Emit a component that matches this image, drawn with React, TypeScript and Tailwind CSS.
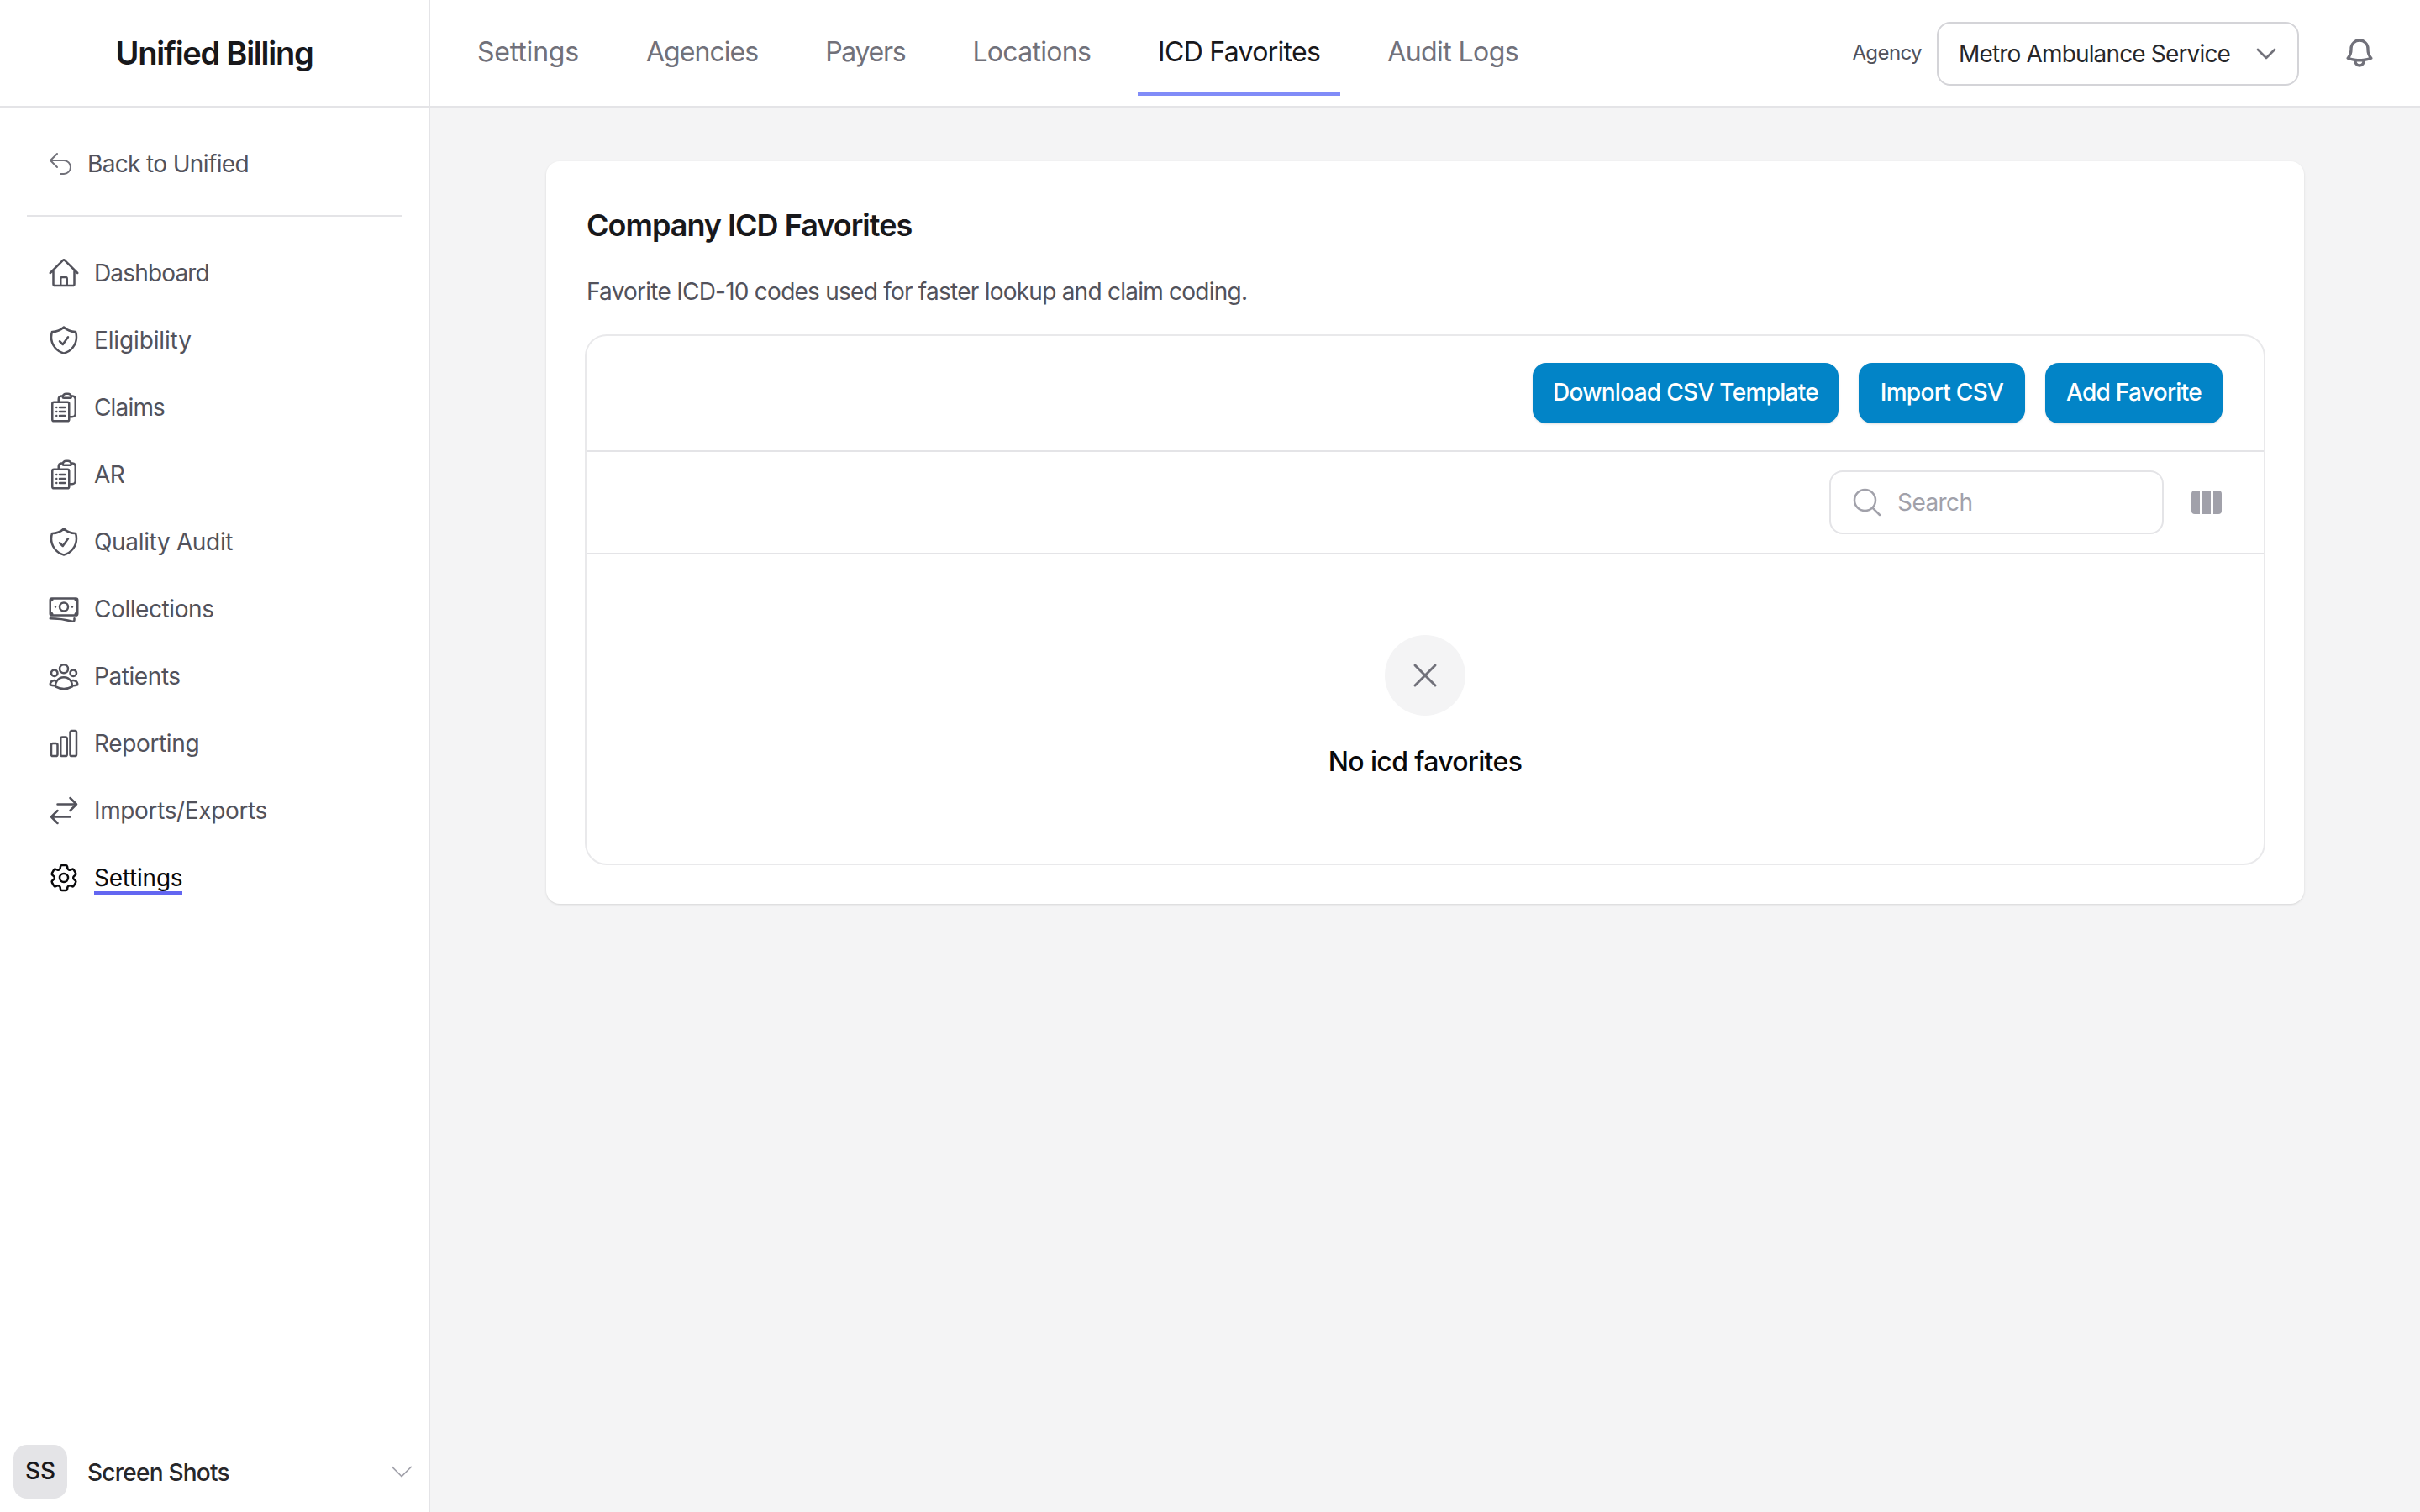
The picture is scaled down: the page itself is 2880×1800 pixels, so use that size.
import React from "react";
import {
  HiOutlineHome, HiOutlineShieldCheck, HiOutlineClipboardDocumentList, HiOutlineBanknotes,
  HiOutlineUserGroup, HiOutlineChartBar, HiOutlineArrowsRightLeft, HiOutlineCog6Tooth,
  HiOutlineArrowUturnLeft, HiOutlineBell, HiOutlineChevronDown, HiOutlineMagnifyingGlass, HiOutlineXMark,
} from "react-icons/hi2";

const nav = [
  { label: "Dashboard", Icon: HiOutlineHome, track: "tracking-[-0.03em]" },
  { label: "Eligibility", Icon: HiOutlineShieldCheck, track: "tracking-[-0.005em]" },
  { label: "Claims", Icon: HiOutlineClipboardDocumentList, track: "tracking-[-0.03em]" },
  { label: "AR", Icon: HiOutlineClipboardDocumentList, track: "tracking-[-0.02em]" },
  { label: "Quality Audit", Icon: HiOutlineShieldCheck, track: "tracking-[-0.012em]" },
  { label: "Collections", Icon: HiOutlineBanknotes, track: "tracking-[-0.015em]" },
  { label: "Patients", Icon: HiOutlineUserGroup, track: "tracking-[-0.015em]" },
  { label: "Reporting", Icon: HiOutlineChartBar, track: "tracking-[-0.013em]" },
  { label: "Imports/Exports", Icon: HiOutlineArrowsRightLeft, track: "tracking-[-0.013em]" },
];
const tabs = [
  { label: "Settings", track: "tracking-[-0.006em]" },
  { label: "Agencies", track: "tracking-[-0.03em]" },
  { label: "Payers", track: "tracking-[-0.04em]" },
  { label: "Locations", track: "tracking-[-0.022em]" },
  { label: "ICD Favorites", track: "tracking-[-0.022em]" },
  { label: "Audit Logs", track: "tracking-[-0.018em]" },
];

function Btn({ children, w }: { children: React.ReactNode; w: string }) {
  return (
    <button className={`${w} h-[72px] rounded-2xl bg-[#0284c7] pb-[2px] text-white text-[28px] font-medium tracking-[-0.025em] shadow-sm`}>
      {children}
    </button>
  );
}

export default function App() {
  return (
    <div className="flex h-[1800px] w-[2880px] overflow-hidden bg-[#f4f4f5] font-['Inter',sans-serif] text-[#09090b]">
      <aside className="flex h-full w-[512px] shrink-0 flex-col border-r-2 border-[#e4e4e7] bg-white">
        <div className="flex h-[128px] shrink-0 items-center justify-center border-b-2 border-[#e4e4e7]">
          <span className="text-[38px] font-semibold tracking-[-0.033em] text-[#18181b]">Unified Billing</span>
        </div>
        <div className="px-8 pt-[47px]">
          <div className="flex h-10 items-center gap-4 pl-6 text-[28px] tracking-[-0.023em] text-[#52525b]">
            <HiOutlineArrowUturnLeft className="h-8 w-8 text-[#71717a]" />
            <span>Back to Unified</span>
          </div>
          <div className="mt-[41px] h-[2px] bg-[#e4e4e7]" />
        </div>
        <nav className="flex flex-col gap-10 px-8 pt-[47px]">
          {nav.map(({ label, Icon, track }) => (
            <div key={label} className={`flex h-10 items-center gap-4 pl-6 text-[28px] text-[#52525b] ${track}`}>
              <Icon className="h-10 w-10" />
              <span>{label}</span>
            </div>
          ))}
          <div className="flex h-10 items-center gap-4 pl-6 text-[28px] tracking-[-0.008em] text-[#09090b]">
            <HiOutlineCog6Tooth className="h-10 w-10" />
            <span className="border-b-4 border-[#6366f1] pt-1 leading-[32px]">Settings</span>
          </div>
        </nav>
        <div className="mt-auto flex items-center pb-4 pl-4 pr-[14px]">
          <div className="flex h-16 w-16 items-center justify-center rounded-2xl bg-[#e4e4e7] pb-[3px] text-[28px] font-medium text-[#18181b]">SS</div>
          <span className="ml-6 pt-[2px] text-[28px] font-medium tracking-[-0.027em] text-[#27272a]">Screen Shots</span>
          <HiOutlineChevronDown className="ml-auto h-9 w-9 text-[#a1a1aa]" strokeWidth={1} />
        </div>
      </aside>

      <div className="flex min-w-0 flex-1 flex-col">
        <header className="flex h-[128px] shrink-0 items-start border-b-2 border-[#e4e4e7] bg-white pl-8 pr-[52px]">
          <div className="flex gap-8">
            {tabs.map(({ label, track }) => {
              const active = label === "ICD Favorites";
              return (
                <div
                  key={label}
                  className={`flex h-[114px] items-center border-b-4 px-6 pt-[14px] text-[32px] ${track} ${
                    active ? "border-[#818cf8] text-[#18181b]" : "border-transparent text-[#71717a]"
                  }`}
                >
                  {label}
                </div>
              );
            })}
          </div>
          <div className="ml-auto flex h-[126px] items-center">
            <span className="text-[24px] tracking-[-0.025em] text-[#52525b]">Agency</span>
            <div className="ml-[18px] mt-[2px] flex h-[76px] w-[431px] items-center justify-between rounded-2xl border-2 border-[#d4d4d8] pl-6 pr-[21px] text-[28px] tracking-[-0.03em] text-[#27272a]">
              <span>Metro Ambulance Service</span>
              <HiOutlineChevronDown className="h-8 w-8 text-[#71717a]" strokeWidth={2} />
            </div>
            <HiOutlineBell className="ml-[52px] h-10 w-10 text-[#71717a]" strokeWidth={2} />
          </div>
        </header>

        <main className="flex-1 pt-16">
          <section className="mx-auto w-[2092px] rounded-2xl bg-white p-12 shadow-sm">
            <h1 className="text-[36px] font-semibold leading-[56px] tracking-[-0.0275em] text-[#18181b]">Company ICD Favorites</h1>
            <p className="mt-[31px] text-[28px] leading-10 tracking-[-0.027em] text-[#52525b]">
              Favorite ICD-10 codes used for faster lookup and claim coding.
            </p>
            <div className="mt-[33px] rounded-3xl ring-2 ring-[#e9e9eb]">
              <div className="flex justify-end gap-6 border-b-2 border-[#e4e4e7] py-8 pl-12 pr-[49px]">
                <Btn w="w-[364px]">Download CSV Template</Btn>
                <Btn w="w-[198px]">Import CSV</Btn>
                <Btn w="w-[211px]">Add Favorite</Btn>
              </div>
              <div className="flex items-center justify-end gap-[33px] border-b-2 border-[#e4e4e7] py-[22px] pr-[50px]">
                <div className="flex h-[76px] w-[398px] items-center gap-4 rounded-2xl border-2 border-[#e4e4e7] pl-[23px] text-[28px] tracking-[-0.02em] text-[#a1a1aa]">
                  <HiOutlineMagnifyingGlass className="h-10 w-10" />
                  <span>Search</span>
                </div>
                <svg viewBox="0 0 36 28" className="h-7 w-9 text-[#a1a1aa]" fill="currentColor">
                  <path d="M4 0h6v28H4a4 4 0 0 1-4-4V4a4 4 0 0 1 4-4z" />
                  <rect x="13" width="10" height="28" />
                  <path d="M26 0h6a4 4 0 0 1 4 4v20a4 4 0 0 1-4 4h-6z" />
                </svg>
              </div>
              <div className="flex flex-col items-center pb-[97px] pt-24">
                <div className="flex h-24 w-24 items-center justify-center rounded-full bg-[#f4f4f5]">
                  <HiOutlineXMark className="h-12 w-12 text-[#71717a]" />
                </div>
                <div className="mt-[31px] text-[32px] font-medium leading-[48px] tracking-[-0.02em] text-[#09090b]">No icd favorites</div>
              </div>
            </div>
          </section>
        </main>
      </div>
    </div>
  );
}
